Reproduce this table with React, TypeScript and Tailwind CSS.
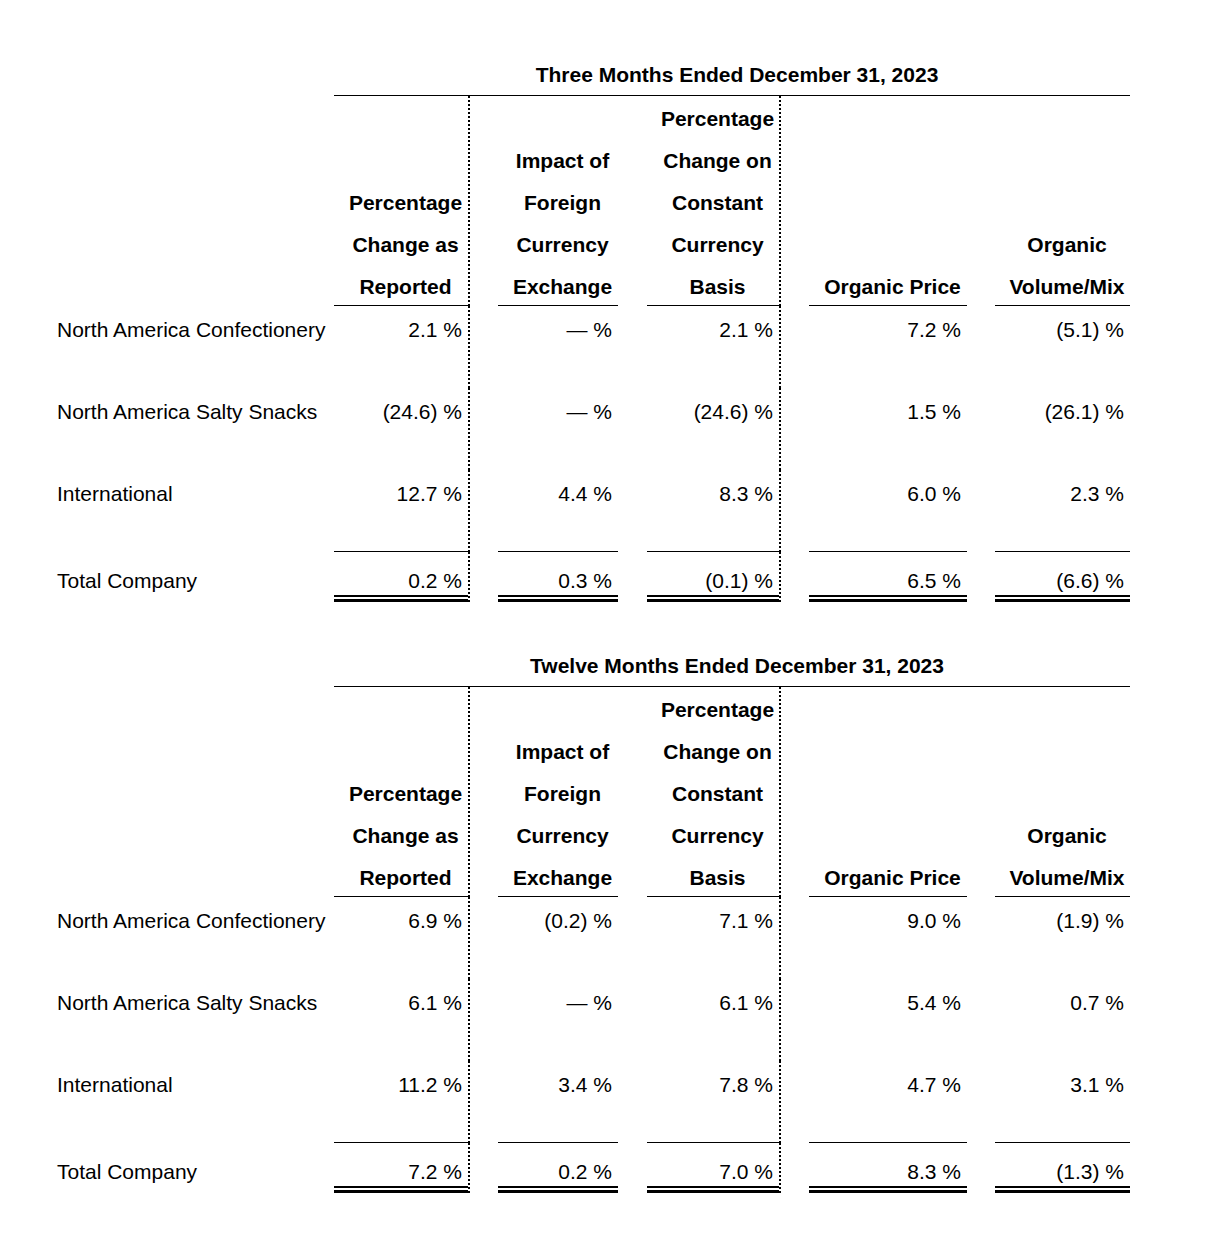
import React from "react";

type Row = { label: string; values: string[] };

const headers: string[][] = [
  ["Percentage", "Change as", "Reported"],
  ["Impact of", "Foreign", "Currency", "Exchange"],
  ["Percentage", "Change on", "Constant", "Currency", "Basis"],
  ["Organic Price"],
  ["Organic", "Volume/Mix"],
];

const threeMonths: { rows: Row[]; total: string[] } = {
  rows: [
    { label: "North America Confectionery", values: ["2.1 %", "— %", "2.1 %", "7.2 %", "(5.1) %"] },
    { label: "North America Salty Snacks", values: ["(24.6) %", "— %", "(24.6) %", "1.5 %", "(26.1) %"] },
    { label: "International", values: ["12.7 %", "4.4 %", "8.3 %", "6.0 %", "2.3 %"] },
  ],
  total: ["0.2 %", "0.3 %", "(0.1) %", "6.5 %", "(6.6) %"],
};

const twelveMonths: { rows: Row[]; total: string[] } = {
  rows: [
    { label: "North America Confectionery", values: ["6.9 %", "(0.2) %", "7.1 %", "9.0 %", "(1.9) %"] },
    { label: "North America Salty Snacks", values: ["6.1 %", "— %", "6.1 %", "5.4 %", "0.7 %"] },
    { label: "International", values: ["11.2 %", "3.4 %", "7.8 %", "4.7 %", "3.1 %"] },
  ],
  total: ["7.2 %", "0.2 %", "7.0 %", "8.3 %", "(1.3) %"],
};

// gap column after value column i (none after the last one)
function Gap({ i }: { i: number }) {
  if (i === 4) return null;
  const dotted = i === 0 || i === 2;
  return <div className={dotted ? "border-l-2 border-dotted border-black" : ""} />;
}

function Block({ title, data }: { title: string; data: { rows: Row[]; total: string[] } }) {
  return (
    <div className="grid grid-cols-[277px_134px_30px_120px_29px_132px_30px_158px_28px_135px]">
      {/* title */}
      <div />
      <div className="col-span-9 h-[41px] border-b border-black pl-[10px] text-center font-bold leading-[40px]">
        {title}
      </div>

      {/* column headers */}
      <div />
      {headers.map((lines, i) => (
        <React.Fragment key={i}>
          <div className="flex h-[210px] flex-col justify-end border-b border-black pl-[9px] text-center font-bold">
            <div className="-mb-[3px] leading-[42px]">
              {lines.map((l) => (
                <div key={l}>{l}</div>
              ))}
            </div>
          </div>
          <Gap i={i} />
        </React.Fragment>
      ))}

      {/* body rows */}
      {data.rows.map((row, r) => {
        const last = r === data.rows.length - 1;
        return (
          <React.Fragment key={row.label}>
            <div className="h-[82px] pt-[12px] leading-[24px]">{row.label}</div>
            {row.values.map((v, i) => (
              <React.Fragment key={i}>
                <div
                  className={`h-[82px] pr-[6px] pt-[12px] text-right leading-[24px] ${last ? "border-b border-black" : ""}`}
                >
                  {v}
                </div>
                <Gap i={i} />
              </React.Fragment>
            ))}
          </React.Fragment>
        );
      })}

      {/* total */}
      <div className="pt-[17px] leading-[24px]">Total Company</div>
      {data.total.map((v, i) => (
        <React.Fragment key={i}>
          <div className="flex flex-col pt-[17px]">
            <div className="pr-[6px] text-right leading-[24px]">{v}</div>
            <div className="mt-[2px] h-[7px] border-b-[3px] border-t-2 border-black" />
          </div>
          <Gap i={i} />
        </React.Fragment>
      ))}
    </div>
  );
}

export default function App() {
  return (
    <div className="min-h-[1260px] bg-white pl-[57px] pt-[55px] font-['Liberation_Sans',Arial,sans-serif] text-[21px] text-black">
      <Block title="Three Months Ended December 31, 2023" data={threeMonths} />
      <div className="mt-[44px]">
        <Block title="Twelve Months Ended December 31, 2023" data={twelveMonths} />
      </div>
    </div>
  );
}
